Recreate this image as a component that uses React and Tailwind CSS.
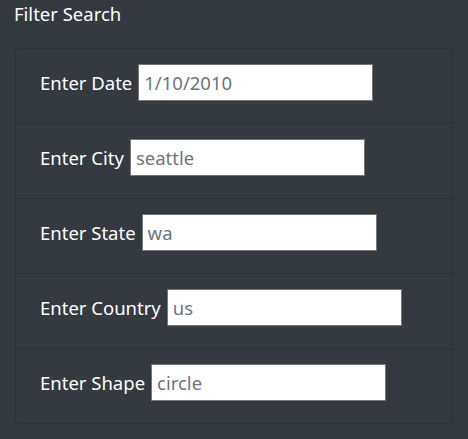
const fields = [
  { label: "Enter Date", value: "1/10/2010" },
  { label: "Enter City", value: "seattle" },
  { label: "Enter State", value: "wa" },
  { label: "Enter Country", value: "us" },
  { label: "Enter Shape", value: "circle" },
];

export default function App() {
  return (
    <div className="min-h-[439px] bg-[#343a40] text-white font-['Noto_Sans',sans-serif] pt-[1px]">
      <h2 className="pl-[14px] text-[18.5px] leading-[26px]">Filter Search</h2>
      <ul className="mx-[15px] mt-[21px] border border-[#2c3136] rounded-[4px]">
        {fields.map((f, i) => (
          <li
            key={f.label}
            className={`flex items-start pl-[24px] pt-[15px] ${i > 0 ? "h-[75px] border-t border-[#2c3136]" : "h-[74px]"}`}
          >
            <label className="text-[18.5px] leading-[37px] mr-[6px]">{f.label}</label>
            <input
              type="text"
              defaultValue={f.value}
              className="w-[235px] h-[37px] bg-white border border-[#767676] px-[5px] text-[18.5px] text-[#6c757d] outline-none"
            />
          </li>
        ))}
      </ul>
    </div>
  );
}
